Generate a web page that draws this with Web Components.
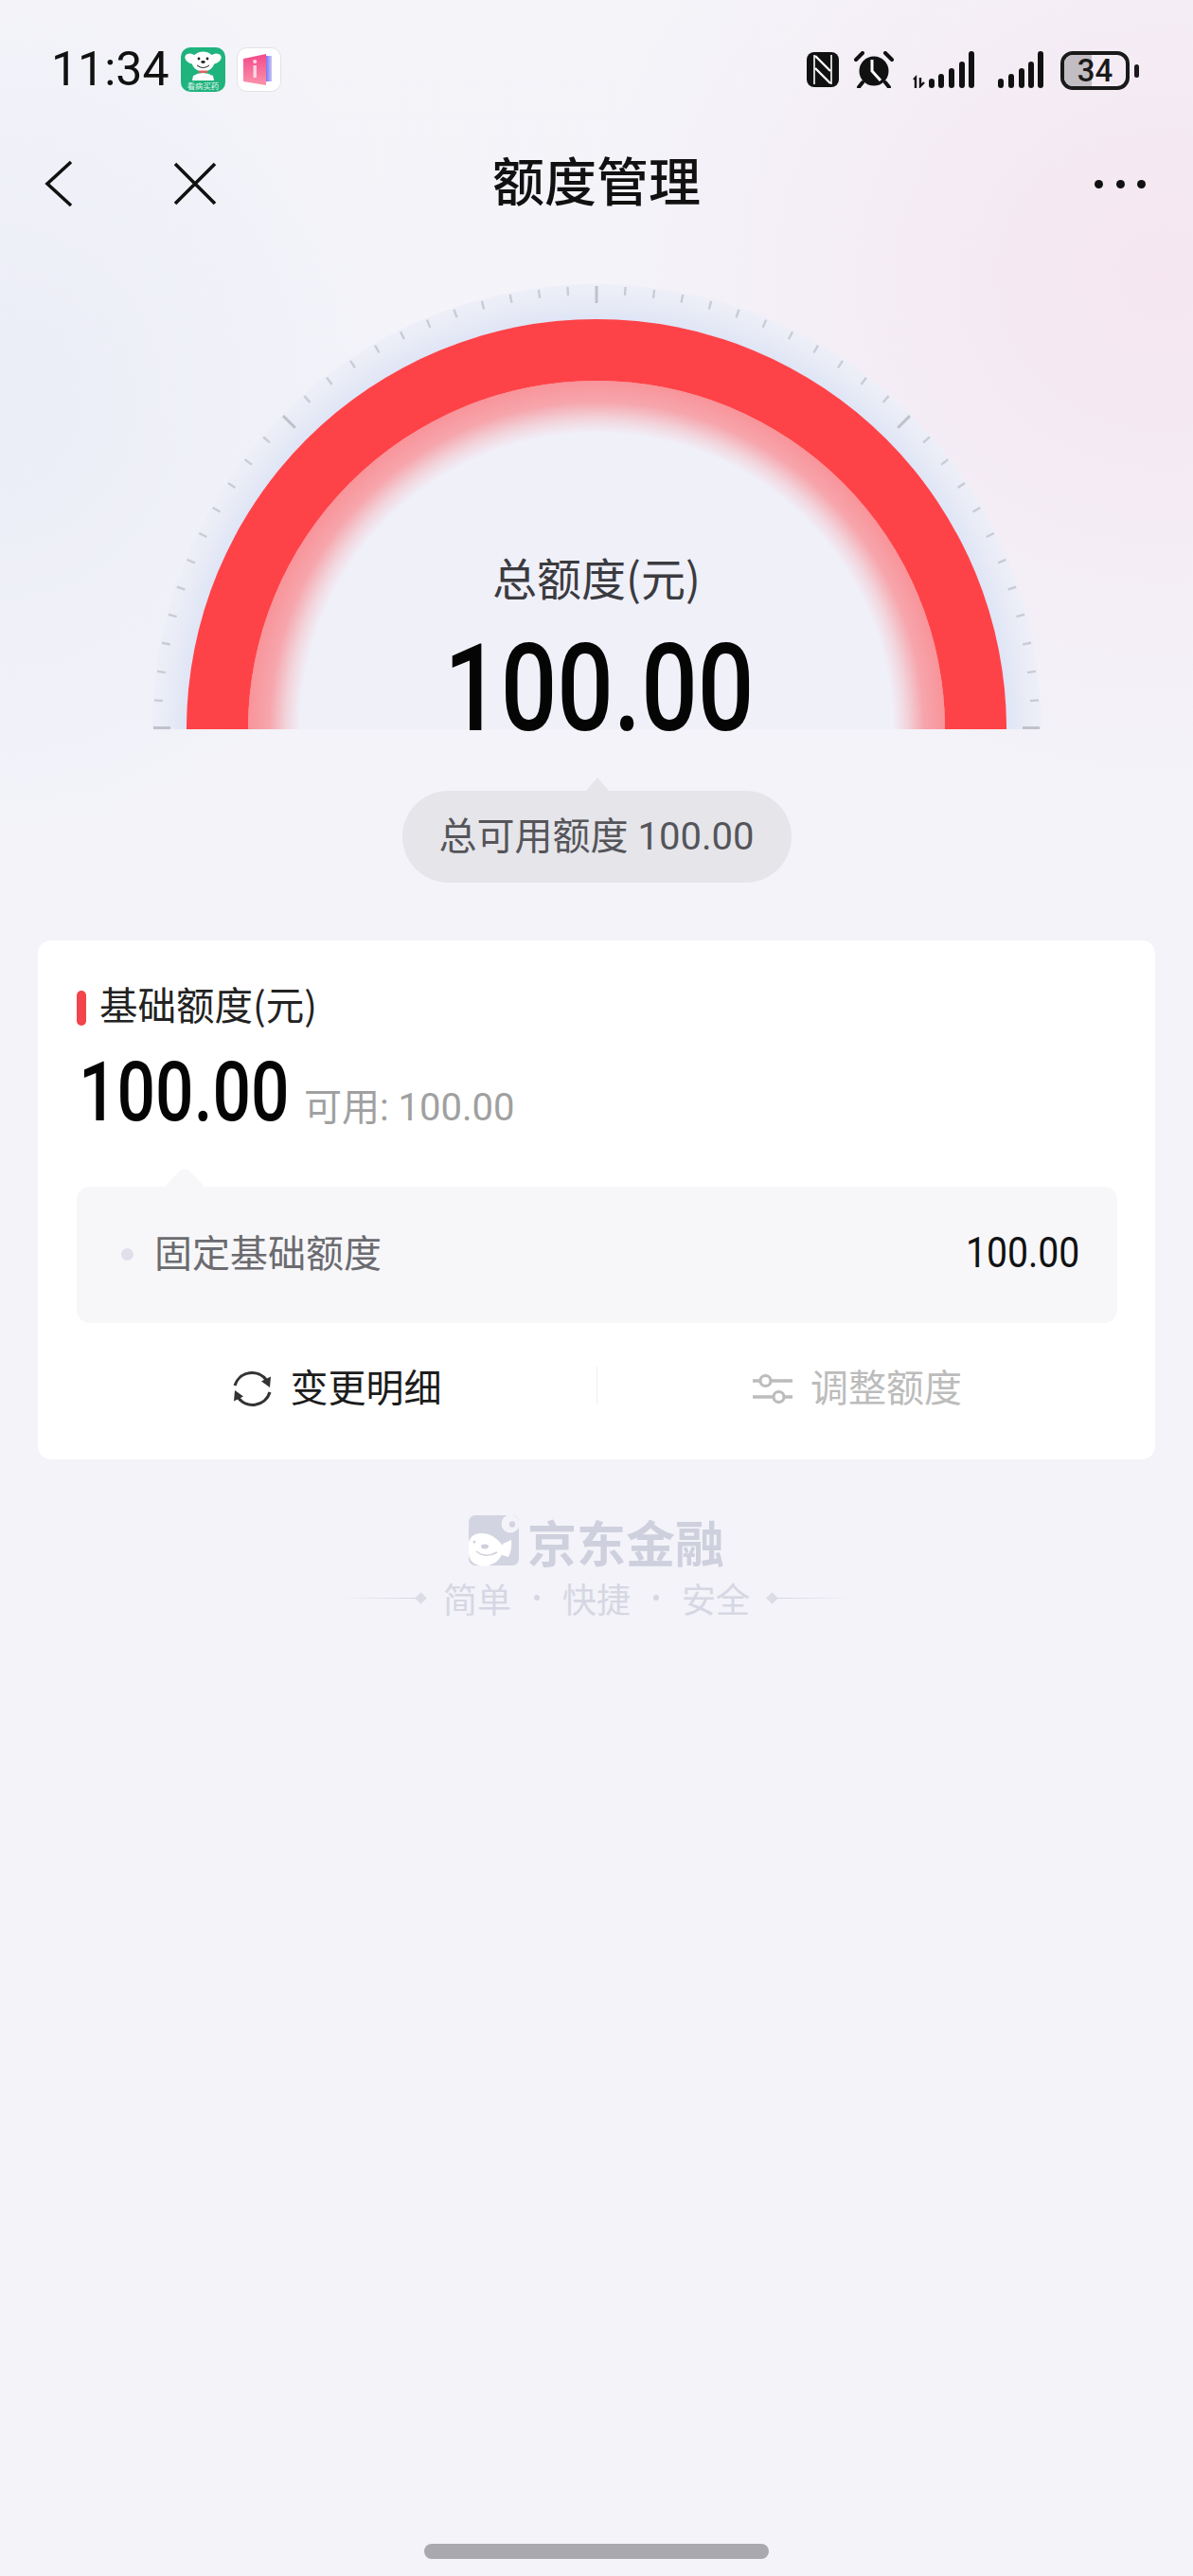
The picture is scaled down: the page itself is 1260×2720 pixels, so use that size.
<!DOCTYPE html>
<html lang="zh">
<head>
<meta charset="utf-8">
<title>额度管理</title>
<style>
  html, body { margin: 0; padding: 0; background: #f3f3f9; }
  body { font-family: Roboto, "Noto Sans CJK SC", sans-serif; }
</style>
</head>
<body>
<quota-page>
  <status-bar></status-bar>
  <nav-bar>额度管理</nav-bar>
  <quota-gauge label="总额度(元)" amount="100.00"></quota-gauge>
  <quota-bubble>总可用额度 100.00</quota-bubble>
  <quota-card title="基础额度(元)" amount="100.00" available="可用: 100.00">
    <span slot="row-label">固定基础额度</span>
    <span slot="row-value">100.00</span>
  </quota-card>
  <brand-footer></brand-footer>
  <home-indicator></home-indicator>
</quota-page>

<script>
const CJK = '"Noto Sans CJK SC", sans-serif';

function shadow(el, html) {
  el.attachShadow({ mode: "open" }).innerHTML = html;
}

// digits in the reference are a narrow DIN cut, so Roboto gets squeezed
class DinNum extends HTMLElement {
  connectedCallback () {
    const sx = this.getAttribute("sx") || 0.82;
    shadow(this, `
      <style>
        :host { display: inline-block; width: calc(3.07em * ${sx}); white-space: nowrap; font-family: Roboto, sans-serif; }
        span { display: inline-block; transform: scaleX(${sx}); transform-origin: 0 50%; }
      </style>
      <span><slot></slot></span>
    `);
  }
}

class QuotaPage extends HTMLElement {
  constructor () {
    super();
    shadow(this, `
      <style>
        :host {
          display: flex;
          flex-direction: column;
          width: 1260px;
          height: 2720px;
          overflow: hidden;
          background:
            radial-gradient(600px 560px at 1230px 290px, rgba(245, 226, 238, .78), rgba(245, 226, 238, 0) 100%),
            radial-gradient(440px 480px at 0px 420px, rgba(228, 232, 246, .55), rgba(228, 232, 246, 0) 100%),
            linear-gradient(180deg, #f4f4f9 0, #f3f3f9 800px);
        }
      </style>
      <slot></slot>
    `);
  }
}

class StatusBar extends HTMLElement {
  constructor () {
    super();
    shadow(this, `
      <style>
        :host { display: flex; align-items: flex-start; height: 120px; box-sizing: border-box; padding: 50px 0 0 54px; color: #111; }
        .time { font: 400 50px/46px Roboto, sans-serif; width: 137px; height: 46px; }
        .apps { display: flex; gap: 12px; }
        .right { display: flex; margin-left: auto; padding-top: 4px; }
        svg { display: block; }
        .batt { position: relative; width: 73px; height: 41px; margin-left: 17px; box-sizing: border-box; border: 4px solid #1a1a1a; border-radius: 13px; overflow: hidden; font: 500 33px/33px Roboto, sans-serif; text-align: center; color: #1a1a1a; }
        .batt::before { content: ""; position: absolute; left: 0; top: 0; bottom: 0; width: 29px; background: #c2bdc2; }
        .batt span { position: relative; }
        .tip { width: 5px; height: 14px; margin: 14px 57px 0 5px; background: #1a1a1a; border-radius: 3px; }
      </style>
      <div class="time">11:34</div>
      <div class="apps">
        <svg width="47" height="47" viewBox="0 0 47 47">
          <rect width="47" height="47" rx="10" fill="#1fb37e"/>
          <path d="M13 30 Q23 24 34 30 L35 35 H12Z" fill="#fff"/>
          <ellipse cx="11" cy="12" rx="7" ry="5" fill="#fff" transform="rotate(25 11 12)"/>
          <ellipse cx="36" cy="12" rx="7" ry="5" fill="#fff" transform="rotate(-25 36 12)"/>
          <ellipse cx="23.5" cy="15" rx="12" ry="10.5" fill="#fff"/>
          <circle cx="19" cy="12" r="1.4" fill="#222"/><circle cx="28" cy="12" r="1.4" fill="#222"/>
          <ellipse cx="23.5" cy="15.5" rx="2.2" ry="1.4" fill="#222"/>
          <path d="M17 19 Q23.5 24 30 19" fill="none" stroke="#222" stroke-width="1"/>
          <rect x="19" y="24.5" width="9" height="2.4" fill="#e8605e"/>
          <text x="23.5" y="43.5" text-anchor="middle" font-size="8.4" font-family='"Noto Sans CJK SC", sans-serif' fill="#e4f6ee">看病买药</text>
        </svg>
        <svg width="47" height="47" viewBox="0 0 47 47">
          <defs>
            <linearGradient id="pg" x1="0" y1="0" x2="0" y2="1"><stop offset="0" stop-color="#f4488a"/><stop offset="1" stop-color="#fb93ab"/></linearGradient>
            <linearGradient id="bg" x1="0" y1="0" x2="1" y2="0"><stop offset="0" stop-color="#6e6cf0"/><stop offset="1" stop-color="#c9c4fa"/></linearGradient>
          </defs>
          <rect x=".5" y=".5" width="46" height="46" rx="10" fill="#fff" stroke="#e2e2e6"/>
          <path d="M30 9 H37 V36 H30Z" fill="url(#bg)"/>
          <path d="M7 12 L31 7 V40 L7 36Z" fill="url(#pg)"/>
          <rect x="17.5" y="19" width="3.4" height="13" fill="#fbd6e0"/><circle cx="19.2" cy="15" r="2.1" fill="#fbd6e0"/>
        </svg>
      </div>
      <div class="right">
        <svg width="34" height="37" viewBox="0 0 34 37" style="margin:1px 16px 0 0">
          <rect width="34" height="37" rx="8" fill="#111"/>
          <path d="M8 3 V34 M26 3 V34" stroke="#fff" stroke-width="1.6" fill="none"/>
          <path d="M9 4 L25 20 M9 17 L25 33" stroke="#fff" stroke-width="2.4" fill="none"/>
        </svg>
        <svg width="42" height="39" viewBox="0 0 42 39" style="margin-right:18px">
          <circle cx="21" cy="21" r="15.5" fill="#111"/>
          <path d="M2 9 L9 2 M40 9 L33 2 M9 33 L5 38 M33 33 L37 38" stroke="#111" stroke-width="4" stroke-linecap="round"/>
          <path d="M19 9 V21 L28 31" stroke="#fff" stroke-width="3" fill="none"/>
        </svg>
        <svg width="68" height="39" viewBox="0 0 68 39" style="margin-right:24px">
          <path d="M3 30 L5 28 V39 M10 28 V37 L14 33" stroke="#111" stroke-width="2.4" fill="none"/>
          <rect x="19" y="29" width="6" height="10" rx="3" fill="#111"/>
          <rect x="29" y="24" width="6" height="15" rx="3" fill="#111"/>
          <rect x="40" y="18" width="6" height="21" rx="3" fill="#111"/>
          <rect x="51" y="11" width="6" height="28" rx="3" fill="#111"/>
          <rect x="61" y="0" width="6" height="39" rx="3" fill="#111"/>
        </svg>
        <svg width="49" height="39" viewBox="0 0 49 39">
          <rect x="0" y="29" width="6" height="10" rx="3" fill="#111"/>
          <rect x="11" y="24" width="6" height="15" rx="3" fill="#111"/>
          <rect x="22" y="18" width="6" height="21" rx="3" fill="#111"/>
          <rect x="32" y="11" width="6" height="28" rx="3" fill="#111"/>
          <rect x="42" y="0" width="6" height="39" rx="3" fill="#111"/>
        </svg>
        <div class="batt"><span>34</span></div>
        <div class="tip"></div>
      </div>
    `);
  }
}

class NavBar extends HTMLElement {
  constructor () {
    super();
    shadow(this, `
      <style>
        :host { display: flex; align-items: center; justify-content: space-between; position: relative; height: 148px; padding: 0 50px 0 47px; box-sizing: border-box; width: 1260px; color: #111; }
        .left { display: flex; gap: 105px; align-items: center; }
        svg { display: block; }
        .title { position: absolute; left: 0; right: 0; top: 38px; text-align: center; font: 500 55px/60px ${CJK}; }
        .more { display: flex; gap: 13.5px; }
        .more i { width: 9px; height: 9px; border-radius: 50%; background: #111; }
      </style>
      <div class="left">
        <svg width="31" height="50" viewBox="0 0 31 50"><path d="M28 2 L3 25 L28 48" fill="none" stroke="#111" stroke-width="3.6"/></svg>
        <svg width="46" height="46" viewBox="0 0 46 46"><path d="M2 2 L44 44 M44 2 L2 44" fill="none" stroke="#111" stroke-width="3.6"/></svg>
      </div>
      <div class="title"><slot></slot></div>
      <div class="more"><i></i><i></i><i></i></div>
    `);
  }
}

class QuotaGauge extends HTMLElement {
  #config = {
    CX: 630,
    CY: 480,
    RED_OUTER: 433,
    RED_INNER: 368,
    RING_OUTER: 470,
    TICK_STEP: 3.75,
  };

  connectedCallback () {
    const { CX, CY, RED_OUTER, RED_INNER, RING_OUTER } = this.#config;
    shadow(this, `
      <style>
        :host { display: grid; width: 1260px; height: 480px; margin-top: 22px; }
        svg { grid-area: 1 / 1; display: block; }
        .center { grid-area: 1 / 1; display: flex; flex-direction: column; align-items: center; justify-self: center; align-self: end; }
        .label { font: 400 47px/60px ${CJK}; color: #3b3b40; }
        din-num { font-size: 128px; line-height: 122px; font-weight: 500; color: #050505; margin-top: 27px; margin-bottom: -18px; }
      </style>
      <svg width="1260" height="480" viewBox="0 0 1260 480">
        <defs>
          <radialGradient id="ring" gradientUnits="userSpaceOnUse" cx="${CX}" cy="${CY}" r="${RING_OUTER}">
            <stop offset="0.92" stop-color="#dfe5f6"/>
            <stop offset="0.96" stop-color="#e8ebf6"/>
            <stop offset="1" stop-color="#eeeff8"/>
          </radialGradient>
          <radialGradient id="glow" gradientUnits="userSpaceOnUse" cx="${CX}" cy="${CY}" r="${RED_INNER}">
            <stop offset="0.85" stop-color="#ff4649" stop-opacity="0"/>
            <stop offset="0.89" stop-color="#ff4649" stop-opacity="0.16"/>
            <stop offset="0.94" stop-color="#ff4649" stop-opacity="0.44"/>
            <stop offset="1" stop-color="#ff4649" stop-opacity="0.54"/>
          </radialGradient>
        </defs>
        <circle cx="${CX}" cy="${CY}" r="${RING_OUTER}" fill="url(#ring)"/>
        <circle cx="${CX}" cy="${CY}" r="${RED_OUTER}" fill="#fe4348"/>
        <circle cx="${CX}" cy="${CY}" r="${RED_INNER}" fill="#f0f0f9"/>
        <circle cx="${CX}" cy="${CY}" r="${RED_INNER}" fill="url(#glow)"/>
        ${this.#ticks()}
      </svg>
      <div class="center">
        <div class="label">${this.getAttribute("label")}</div>
        <din-num sx="0.82">${this.getAttribute("amount")}</din-num>
      </div>
    `);
  }

  #ticks () {
    const { CX, CY, RING_OUTER, TICK_STEP } = this.#config;
    const out = [];
    for (let i = 0; i <= 48; i++) {
      const a = (i * TICK_STEP) * Math.PI / 180;
      const isLong = i % 12 === 0;
      const r1 = RING_OUTER - (isLong ? 20 : 11);
      const r2 = RING_OUTER - 2;
      // i = 0 is the left end, lift the two ends a pixel so they stay inside the box
      const lift = (i === 0 || i === 48) ? 1.5 : 0;
      out.push(`<line x1="${(CX - Math.cos(a) * r1).toFixed(1)}" y1="${(CY - Math.sin(a) * r1 - lift).toFixed(1)}" x2="${(CX - Math.cos(a) * r2).toFixed(1)}" y2="${(CY - Math.sin(a) * r2 - lift).toFixed(1)}" stroke="${isLong ? "#bfc1cb" : "#c9cbd5"}" stroke-width="${isLong ? 3 : 2.4}"/>`);
    }
    return out.join("");
  }
}

class QuotaBubble extends HTMLElement {
  constructor () {
    super();
    shadow(this, `
      <style>
        :host { display: flex; align-items: center; justify-content: center; position: relative; align-self: center; width: 411px; height: 97px; margin-top: 65px; box-sizing: border-box; background: #e5e5ea; border-radius: 49px; color: #55555a; font: 400 40px/50px Roboto, ${CJK}; white-space: nowrap; }
        :host::before { content: ""; position: absolute; left: 194px; top: -14px; width: 0; height: 0; border: 12px solid transparent; border-top: 0; border-bottom: 14px solid #e5e5ea; }
      </style>
      <slot></slot>
    `);
  }
}

class QuotaCard extends HTMLElement {
  connectedCallback () {
    shadow(this, `
      <style>
        :host { display: block; align-self: center; box-sizing: border-box; width: 1180px; height: 548px; margin-top: 61px; background: #fff; border-radius: 14px; padding: 50px 40px 0 41px; }
        .head { display: flex; align-items: center; gap: 14px; height: 42px; font: 400 40.5px/42px ${CJK}; color: #222; }
        .head i { width: 10px; height: 37px; border-radius: 5px; background: #f2444a; }
        .head span { margin-bottom: 8px; }
        .amount { display: flex; align-items: baseline; margin-top: 28px; height: 80px; }
        din-num { font-size: 87px; line-height: 80px; font-weight: 500; color: #050505; margin-left: 2px; }
        .avail { font: 400 40px/50px Roboto, ${CJK}; color: #a0a0a0; margin-left: 19px; }
        .panel { display: flex; align-items: center; position: relative; height: 144px; margin-top: 60px; padding: 0 40px 0 47px; background: #f7f7fa; border-radius: 14px; }
        .panel::before { content: ""; position: absolute; left: 93px; top: -19px; width: 42px; height: 19px; background: #f7f7fa; clip-path: polygon(0 100%, 40% 6%, 50% 0, 60% 6%, 100% 100%); }
        .panel i { width: 13px; height: 13px; border-radius: 50%; background: #e0e0ea; margin-right: 22px; margin-bottom: 2px; }
        .label { flex: 1; font: 400 40px/50px ${CJK}; color: #6b6b70; margin-bottom: 8px; }
        .value din-num { font-size: 45px; line-height: 50px; font-weight: 400; color: #111; margin: 0 0 4px; display: block; }
        .actions { display: grid; grid-template-columns: 1fr 1px 1fr; align-items: center; height: 132px; }
        .action { display: flex; align-items: center; justify-content: center; gap: 19px; font: 400 40px/50px ${CJK}; color: #1c1c1c; }
        .action.off { color: #bcbcbc; }
        .action svg { margin-top: 6px; }
        .divider { width: 1px; height: 40px; background: #eeeef2; }
        svg { display: block; }
      </style>
      <div class="head"><i></i><span>${this.getAttribute("title")}</span></div>
      <div class="amount">
        <din-num sx="0.82">${this.getAttribute("amount")}</din-num>
        <span class="avail">${this.getAttribute("available")}</span>
      </div>
      <div class="panel">
        <i></i>
        <span class="label"><slot name="row-label"></slot></span>
        <span class="value"><din-num sx="0.87"><slot name="row-value"></slot></din-num></span>
      </div>
      <div class="actions">
        <div class="action">
          <svg width="43" height="43" viewBox="0 0 43 43">
            <path d="M3 18 A19 19 0 0 1 37 13" fill="none" stroke="#333" stroke-width="3.2"/>
            <path d="M40 20 L31 13.5 L41 8.5Z" fill="#333"/>
            <path d="M40 25 A19 19 0 0 1 6 30" fill="none" stroke="#333" stroke-width="3.2"/>
            <path d="M3 23 L12 29.5 L2 34.5Z" fill="#333"/>
          </svg>
          <span>变更明细</span>
        </div>
        <div class="divider"></div>
        <div class="action off">
          <svg width="42" height="32" viewBox="0 0 42 32">
            <path d="M0 8 H8 M19 8 H42 M0 25 H22 M33 25 H42" stroke="#bcbcbc" stroke-width="3.4" fill="none"/>
            <circle cx="13.5" cy="8" r="5.5" fill="none" stroke="#bcbcbc" stroke-width="3.2"/>
            <circle cx="27.5" cy="25" r="5.5" fill="none" stroke="#bcbcbc" stroke-width="3.2"/>
          </svg>
          <span>调整额度</span>
        </div>
      </div>
    `);
  }
}

class BrandFooter extends HTMLElement {
  constructor () {
    super();
    shadow(this, `
      <style>
        :host { display: flex; flex-direction: column; align-items: center; margin-top: 59px; }
        .brand { display: flex; align-items: center; gap: 9px; height: 55px; }
        .name { font: 700 52px/55px ${CJK}; color: #cfd0de; letter-spacing: 0; }
        svg { display: block; }
        .slogan { display: flex; align-items: center; margin-top: 12px; height: 40px; font: 400 36px/40px ${CJK}; color: #d6d7e3; white-space: nowrap; }
        .dot { width: 6px; height: 6px; border-radius: 50%; background: #d6d7e3; margin: 0 24px; }
        .line { display: flex; align-items: center; width: 90px; }
        .line b { flex: 1; height: 1px; }
        .line.l b { background: linear-gradient(90deg, rgba(214,214,226,0), #d6d6e2); }
        .line.r b { background: linear-gradient(90deg, #d6d6e2, rgba(214,214,226,0)); }
        .line i { width: 9px; height: 9px; background: #dcdce6; transform: rotate(45deg); flex: none; }
        .line.l { margin-right: 19px; }
        .line.r { margin-left: 19px; }
      </style>
      <div class="brand">
        <svg width="53" height="55" viewBox="0 0 53 55">
          <rect y="0" width="53" height="53" rx="7" fill="#d3d4e1"/>
          <circle cx="44" cy="9" r="9.5" fill="#f3f3f9"/><circle cx="46" cy="9.5" r="3.2" fill="#d3d4e1"/>
          <path d="M0 28 Q2 20 12 19 Q26 18 36 32 Q38 42 28 50 Q18 56 8 52 Q0 48 0 40Z" fill="#fff"/>
          <path d="M36 30 L45 26 Q46 36 42 44 L35 42Z" fill="#fff"/>
          <ellipse cx="17" cy="33" rx="4" ry="2.4" fill="#cfd0dc"/>
          <circle cx="6" cy="28" r="1.5" fill="#cfd0dc"/>
          <path d="M8 38 Q18 46 30 39" fill="none" stroke="#cfd0dc" stroke-width="1.5"/>
        </svg>
        <span class="name">京东金融</span>
      </div>
      <div class="slogan">
        <span class="line l"><b></b><i></i></span>
        <span>简单</span><span class="dot"></span><span>快捷</span><span class="dot"></span><span>安全</span>
        <span class="line r"><i></i><b></b></span>
      </div>
    `);
  }
}

class HomeIndicator extends HTMLElement {
  constructor () {
    super();
    shadow(this, `
      <style>
        :host { display: block; align-self: center; width: 364px; height: 16px; margin-top: auto; margin-bottom: 18px; border-radius: 8px; background: #aaa9af; }
      </style>
    `);
  }
}

customElements.define("din-num", DinNum);
customElements.define("quota-page", QuotaPage);
customElements.define("status-bar", StatusBar);
customElements.define("nav-bar", NavBar);
customElements.define("quota-gauge", QuotaGauge);
customElements.define("quota-bubble", QuotaBubble);
customElements.define("quota-card", QuotaCard);
customElements.define("brand-footer", BrandFooter);
customElements.define("home-indicator", HomeIndicator);
</script>
</body>
</html>
